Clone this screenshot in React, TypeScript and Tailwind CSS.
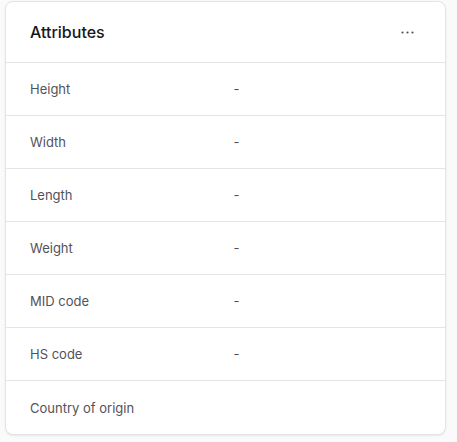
import React from "react";

const rows = [
  ["Height", "-"],
  ["Width", "-"],
  ["Length", "-"],
  ["Weight", "-"],
  ["MID code", "-"],
  ["HS code", "-"],
  ["Country of origin", ""],
];

export default function App() {
  return (
    <div
      className="w-[457px] h-[442px] bg-[#fafafa] pl-[5px] pt-px"
      style={{ fontFamily: "Inter, 'Noto Sans', sans-serif" }}
    >
      <div className="w-[441px] bg-white rounded-lg border border-[#e4e4e7] shadow-[0_1px_2px_rgba(0,0,0,0.08)] overflow-hidden">
        <div className="h-[61px] flex items-center justify-between pl-6 pr-[30px] border-b border-[#e4e4e7]">
          <h2 className="text-[16px] font-medium text-[#18181b]">Attributes</h2>
          <svg width="15" height="15" viewBox="0 0 15 15" fill="#52525b">
            <circle cx="2.5" cy="7.5" r="1.1" />
            <circle cx="7.5" cy="7.5" r="1.1" />
            <circle cx="12.5" cy="7.5" r="1.1" />
          </svg>
        </div>
        {rows.map(([label, value], i) => (
          <div
            key={label}
            className={`h-[53px] grid grid-cols-2 gap-4 items-center px-6 pt-0.5 ${
              i < rows.length - 1 ? "border-b border-[#e4e4e7]" : ""
            }`}
          >
            <span className="text-[13px] font-normal text-[#52525b]">{label}</span>
            <span className="text-[13px] text-[#52525b]">{value}</span>
          </div>
        ))}
      </div>
    </div>
  );
}
